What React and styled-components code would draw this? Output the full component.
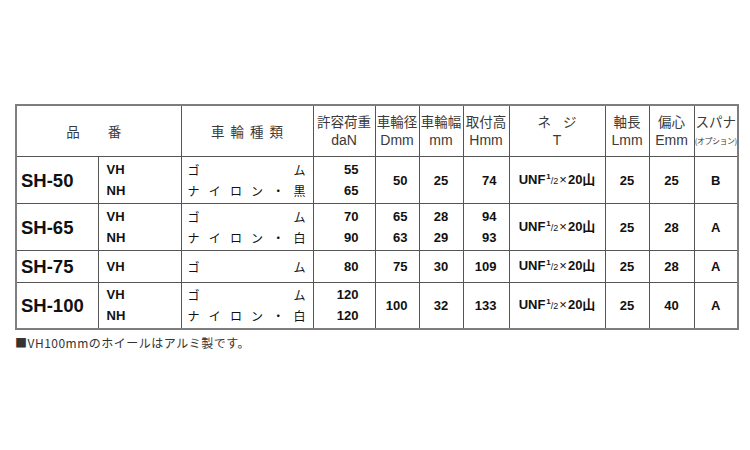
import React from 'react';
import styled, { createGlobalStyle } from 'styled-components';

const GlobalStyle = createGlobalStyle`
  html, body {
    margin: 0;
    padding: 0;
    background: #fff;
  }
  body {
    font-family: "Liberation Sans", Arial, "Noto Sans CJK JP", sans-serif;
    color: #111;
  }
`;

const Page = styled.div`
  width: 750px;
  height: 450px;
  padding: 104px 0 0 15px;
  box-sizing: border-box;
`;

const Table = styled.table`
  width: 722px;
  table-layout: fixed;
  border-collapse: collapse;
  border: 2px solid #7d7d7d;
`;

const Col = styled.col`
  width: ${(p) => p.$w}px;
`;

const Head = styled.th`
  height: 50px;
  padding: 0 ${(p) => p.$shift || 0}px 0 0;
  border: 1px solid #555;
  font-family: "Noto Sans CJK JP", "Liberation Sans", sans-serif;
  font-weight: 400;
  font-size: 13.5px;
  line-height: 19px;
  color: #3a3a3a;
  text-align: center;
  vertical-align: middle;
  white-space: nowrap;
  overflow: hidden;
`;

const Spread = styled.div`
  display: flex;
  justify-content: center;
  gap: ${(p) => p.$gap}px;
`;

const Unit = styled.div`
  font-family: "Liberation Sans", Arial, sans-serif;
  font-size: 14px;
`;

const Option = styled.div`
  font-size: 8px;
  line-height: 19px;
  letter-spacing: -0.5px;
`;

const Row = styled.tr`
  height: ${(p) => p.$h}px;
`;

const Cell = styled.td`
  padding: ${(p) => (p.$align === 'right' ? `0 ${p.$pad}px 0 0` : `0 ${p.$pad || 0}px`)};
  border: 1px solid #555;
  font-weight: 700;
  font-size: 13px;
  line-height: 21px;
  text-align: ${(p) => p.$align || 'center'};
  vertical-align: middle;
  white-space: nowrap;
`;

const Model = styled(Cell)`
  font-size: 18.5px;
  padding-left: 4px;
  text-align: left;
`;

const Kind = styled.td`
  padding: 0 7px 0 6px;
  border: 1px solid #555;
  font-family: "Noto Sans CJK JP", sans-serif;
  font-size: 12px;
  line-height: 21px;
  vertical-align: middle;
`;

const KindLine = styled.div`
  display: flex;
  justify-content: space-between;
`;

const Thread = styled.span`
  font-size: 13px;
`;

const Sup = styled.sup`
  font-size: 8px;
  vertical-align: 5px;
  line-height: 0;
  margin-left: 1px;
`;

const Small = styled.span`
  font-size: 9px;
  font-weight: 400;
`;

const Times = styled.span`
  font-weight: 400;
  margin: 0 1px;
`;

const Note = styled.p`
  margin: 4px 0 0 0;
  font-family: "Noto Sans CJK JP", sans-serif;
  font-size: 12px;
  letter-spacing: 0.5px;
  color: #333;
`;

const kinds = {
  rubber: ['ゴ', 'ム'],
  black: ['ナ', 'イ', 'ロ', 'ン', '・', '黒'],
  white: ['ナ', 'イ', 'ロ', 'ン', '・', '白'],
};

const rows = [
  { model: 'SH-50', h: 47, types: ['VH', 'NH'], kinds: ['rubber', 'black'], load: ['55', '65'], d: ['50'], w: ['25'], ht: ['74'], l: '25', e: '25', s: 'B' },
  { model: 'SH-65', h: 47, types: ['VH', 'NH'], kinds: ['rubber', 'white'], load: ['70', '90'], d: ['65', '63'], w: ['28', '29'], ht: ['94', '93'], l: '25', e: '28', s: 'A' },
  { model: 'SH-75', h: 32, types: ['VH'], kinds: ['rubber'], load: ['80'], d: ['75'], w: ['30'], ht: ['109'], l: '25', e: '28', s: 'A' },
  { model: 'SH-100', h: 46, types: ['VH', 'NH'], kinds: ['rubber', 'white'], load: ['120', '120'], d: ['100'], w: ['32'], ht: ['133'], l: '25', e: '40', s: 'A' },
];

const Lines = ({ items }) => items.map((v, i) => <div key={i}>{v}</div>);

const SpreadText = ({ text, gap }) => (
  <Spread $gap={gap}>
    {text.split('').map((c, i) => (
      <span key={i}>{c}</span>
    ))}
  </Spread>
);

const widths = [82, 83, 132, 62, 44, 44, 46, 96, 44, 45, 44];

export default function App() {
  return (
    <Page>
      <GlobalStyle />
      <Table>
        <colgroup>
          {widths.map((w, i) => (
            <Col key={i} $w={w} />
          ))}
        </colgroup>
        <thead>
          <tr>
            <Head colSpan={2} $shift={10}><SpreadText text="品番" gap={28} /></Head>
            <Head><SpreadText text="車輪種類" gap={6} /></Head>
            <Head>許容荷重<Unit>daN</Unit></Head>
            <Head>車輪径<Unit>Dmm</Unit></Head>
            <Head>車輪幅<Unit>mm</Unit></Head>
            <Head>取付高<Unit>Hmm</Unit></Head>
            <Head><SpreadText text="ネジ" gap={12} /><Unit>T</Unit></Head>
            <Head>軸長<Unit>Lmm</Unit></Head>
            <Head>偏心<Unit>Emm</Unit></Head>
            <Head>スパナ<Option>(オプション)</Option></Head>
          </tr>
        </thead>
        <tbody>
          {rows.map((r) => (
            <Row key={r.model} $h={r.h}>
              <Model>{r.model}</Model>
              <Cell $align="left" $pad={8}><Lines items={r.types} /></Cell>
              <Kind>
                {r.kinds.map((k, i) => (
                  <KindLine key={i}>
                    {kinds[k].map((c, j) => (
                      <span key={j}>{c}</span>
                    ))}
                  </KindLine>
                ))}
              </Kind>
              <Cell $align="right" $pad={16}><Lines items={r.load} /></Cell>
              <Cell $align="right" $pad={11}><Lines items={r.d} /></Cell>
              <Cell><Lines items={r.w} /></Cell>
              <Cell $align="right" $pad={12}><Lines items={r.ht} /></Cell>
              <Cell>
                <Thread>UNF<Sup>1</Sup><Small>/2</Small><Times>×</Times>20山</Thread>
              </Cell>
              <Cell>{r.l}</Cell>
              <Cell>{r.e}</Cell>
              <Cell>{r.s}</Cell>
            </Row>
          ))}
        </tbody>
      </Table>
      <Note>■VH100mmのホイールはアルミ製です。</Note>
    </Page>
  );
}
